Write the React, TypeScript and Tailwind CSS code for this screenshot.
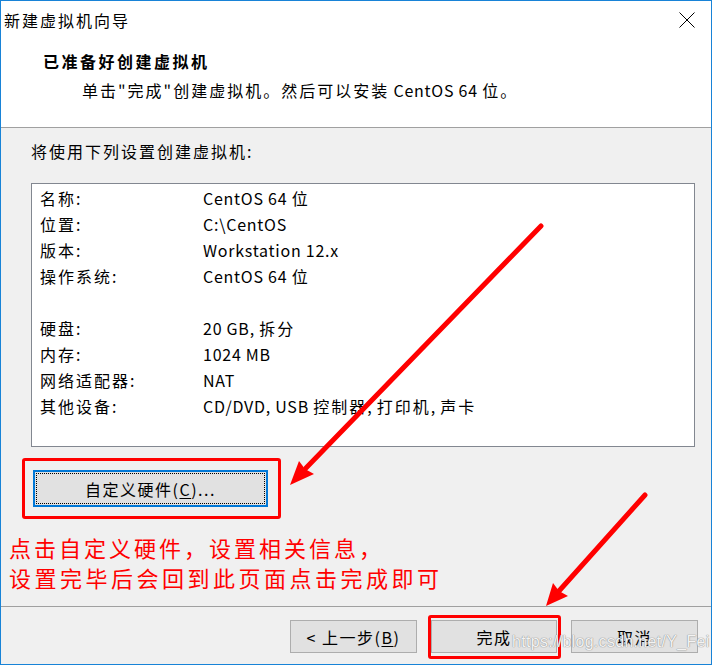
import React from 'react';

const rows: [string, string][] = [
  ['名称:', 'CentOS 64 位'],
  ['位置:', 'C:\\CentOS'],
  ['版本:', 'Workstation 12.x'],
  ['操作系统:', 'CentOS 64 位'],
  ['', ''],
  ['硬盘:', '20 GB, 拆分'],
  ['内存:', '1024 MB'],
  ['网络适配器:', 'NAT'],
  ['其他设备:', 'CD/DVD, USB 控制器, 打印机, 声卡'],
];

// widen the CJK runs a bit, latin stays tight
const Mixed = ({ text }: { text: string }) => (
  <>
    {text.split(/([\u4e00-\u9fff。，]+)/).map((part, i) =>
      /[\u4e00-\u9fff]/.test(part) ? (
        <span key={i} className="tracking-[2px]">{part}</span>
      ) : (
        <span key={i}>{part}</span>
      )
    )}
  </>
);

const App = () => {
  return (
    <div
      className="relative w-[712px] h-[665px] flex flex-col bg-[#f0f0f0] border border-[#1883d7] text-black text-[16px] tracking-[0.75px]"
      style={{ fontFamily: '"Noto Sans CJK SC", "Noto Sans", sans-serif' }}
    >
      {/* header */}
      <div className="bg-white h-[127px] border-b border-[#a0a0a0] shrink-0">
        <div className="h-[38px] flex items-center justify-between pl-[3px] pr-[16px]">
          <span className="tracking-[2px]">新建虚拟机向导</span>
          <svg width="16" height="16" viewBox="0 0 16 16">
            <path d="M0.5 0.5 L15.5 15.5 M15.5 0.5 L0.5 15.5" stroke="#000" strokeWidth="1" />
          </svg>
        </div>
        <div className="pl-[42px] mt-[10px] leading-[24px] font-bold tracking-[2.5px]">
          已准备好创建虚拟机
        </div>
        <div className="pl-[81px] mt-[5px] leading-[24px]">
          <span className="tracking-[2px]">单击"完成"创建虚拟机。然后可以安装</span> CentOS 64 <span className="tracking-[2px]">位。</span>
        </div>
      </div>

      {/* body */}
      <div className="flex-1 px-[30px] pt-[11px]">
        <div className="leading-[24px] tracking-[2px]">将使用下列设置创建虚拟机:</div>
        <div className="mt-[20px] w-[664px] h-[264px] bg-white border border-[#828790] pt-[1px] pl-[8px]">
          {rows.map(([k, v], i) => (
            <div key={i} className="flex h-[26px] items-center">
              <span className="w-[163px] tracking-[2px]">{k}</span>
              <span>
                <Mixed text={v} />
              </span>
            </div>
          ))}
        </div>

        <div className="relative mt-[23px] ml-[2px] w-[235px] h-[37px]">
          <button className="w-full h-full bg-[#e1e1e1] border-2 border-[#0078d7] p-[1px]">
            <div className="w-full h-full border border-dotted border-black flex items-center justify-center tracking-[1.5px]">
              自定义硬件(<span className="underline underline-offset-2">C</span>)...
            </div>
          </button>
          <span className="absolute -left-[11px] -top-[12px] -right-[13px] -bottom-[12px] border-[3px] border-[#ff0000] rounded-[3px]" />
        </div>

        <div className="-ml-[22px] mt-[25px] text-[#ff0000] text-[22px] leading-[30px] tracking-[3px]">
          <div>点击自定义硬件，设置相关信息，</div>
          <div className="tracking-[3.5px]">设置完毕后会回到此页面点击完成即可</div>
        </div>
      </div>

      {/* footer */}
      <div className="h-[58px] border-t border-[#a0a0a0] shrink-0 flex justify-end items-start gap-[14px] pt-[13px] pr-[13px] tracking-[1.5px]">
        <button className="w-[127px] h-[33px] bg-[#e1e1e1] border border-[#adadad] flex items-center justify-center">
          &lt; 上一步(<span className="underline underline-offset-2">B</span>)
        </button>
        <button className="relative w-[126px] h-[33px] bg-[#e1e1e1] border border-[#adadad] flex items-center justify-center">
          完成
          <span className="absolute -left-[4px] -right-[5px] -top-[6px] -bottom-[7px] border-[3px] border-[#ff0000] rounded-[3px]" />
        </button>
        <button className="w-[127px] h-[33px] bg-[#e1e1e1] border border-[#adadad] flex items-center justify-center">
          取消
        </button>
      </div>

      {/* annotation arrows */}
      <svg className="absolute -left-[1px] -top-[1px] pointer-events-none" width="712" height="665">
        <line x1="541" y1="226" x2="306" y2="468" stroke="#ff0000" strokeWidth="5" strokeLinecap="round" />
        <polygon points="290,485 299,461 305,469 314,474" fill="#ff0000" />
        <line x1="645" y1="495" x2="559" y2="591" stroke="#ff0000" strokeWidth="5" strokeLinecap="round" />
        <polygon points="546,606 553,583 559,591 568,596" fill="#ff0000" />
      </svg>

      {/* watermark */}
      <div
        className="absolute left-[511px] top-[632px] text-[16px] leading-[18px] tracking-[0.3px] text-white/90 [text-shadow:0_0_1px_#888,0_0_1px_#888] pointer-events-none whitespace-nowrap"
        style={{ fontFamily: '"Liberation Sans", Arial, sans-serif' }}
      >
        https://blog.csdn.net/Y_Fei
      </div>
    </div>
  );
};

export default App;
